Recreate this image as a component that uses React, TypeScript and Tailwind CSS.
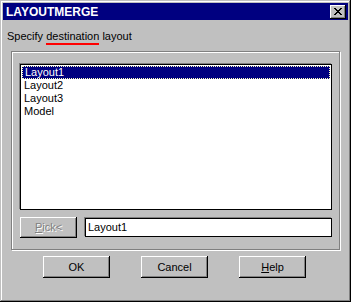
import React from 'react';

const font = { fontFamily: '"Liberation Sans", Arial, sans-serif' };

function CloseGlyph() {
  return (
    <svg width="8" height="7" viewBox="0 0 8 7" shapeRendering="crispEdges">
      <path
        d="M0 0h2v1h-2zM6 0h2v1h-2zM1 1h2v1h-2zM5 1h2v1h-2zM2 2h4v1h-4zM3 3h2v1h-2zM2 4h4v1h-4zM1 5h2v1h-2zM5 5h2v1h-2zM0 6h2v1h-2zM6 6h2v1h-2z"
        fill="#000"
      />
    </svg>
  );
}

function Button({ children, className = '' }: { children: React.ReactNode; className?: string }) {
  return (
    <div
      className={`flex items-center justify-center bg-[#c0c0c0] text-[11px] leading-[13px] text-black shadow-[inset_-1px_-1px_#000,inset_1px_1px_#fff,inset_-2px_-2px_#808080] ${className}`}
    >
      {children}
    </div>
  );
}

const layouts = ['Layout1', 'Layout2', 'Layout3', 'Model'];

export default function App() {
  return (
    <div
      style={font}
      className="w-[351px] h-[302px] bg-[#c0c0c0] p-[3px] flex flex-col shadow-[inset_-1px_-1px_#000,inset_1px_1px_#c0c0c0,inset_-2px_-2px_#808080,inset_2px_2px_#fff]"
    >
      {/* title bar */}
      <div className="h-[17px] bg-[#000080] flex items-center justify-between pl-[3px] pr-[2px]">
        <span className="text-white font-bold text-[12px] leading-[14px]">LAYOUTMERGE</span>
        <div className="w-[16px] h-[14px] bg-[#c0c0c0] flex items-center justify-center shadow-[inset_-1px_-1px_#000,inset_1px_1px_#fff,inset_-2px_-2px_#808080]">
          <CloseGlyph />
        </div>
      </div>

      <div className="mt-[10px] pl-[4px] text-[11px] leading-[13px] text-black">
        Specify{' '}
        <span className="relative">
          destination
          <span className="absolute left-0 right-0 top-[13px] h-[2px] bg-[#ff0000]" />
        </span>{' '}
        layout
      </div>

      {/* group box */}
      <div className="mt-[8px] ml-[8px] w-[329px] h-[199px] border border-[#808080] shadow-[1px_1px_0_#fff,inset_1px_1px_0_#fff] pl-[8px] pt-[12px]">
        <div className="w-[312px] h-[146px] bg-white border border-black shadow-[-1px_-1px_0_#808080] p-[1px]">
          {layouts.map((l, i) => (
            <div
              key={l}
              className={`h-[13px] pl-[2px] text-[11px] leading-[11px] ${
                i === 0 ? 'bg-[#000080] text-white border border-dotted border-[#ffffc0] pl-[1px]' : 'text-black pt-[1px]'
              }`}
            >
              {l}
            </div>
          ))}
        </div>

        <div className="mt-[7px] flex items-center">
          <Button className="w-[57px] h-[21px]">
            <span className="text-[#808080] [text-shadow:1px_1px_0_#fff]">
              <span className="underline">P</span>ick&lt;
            </span>
          </Button>
          <div className="ml-[8px] w-[247px] h-[19px] bg-white border border-black shadow-[-1px_-1px_0_#808080] pl-[2px] flex items-center text-[11px] text-black">
            Layout1
          </div>
        </div>
      </div>

      {/* buttons */}
      <div className="mt-[6px] pl-[40px] flex gap-[31px]">
        <Button className="w-[67px] h-[22px]">OK</Button>
        <Button className="w-[67px] h-[22px]">Cancel</Button>
        <Button className="w-[67px] h-[22px]">
          <span>
            <span className="underline">H</span>elp
          </span>
        </Button>
      </div>
    </div>
  );
}
